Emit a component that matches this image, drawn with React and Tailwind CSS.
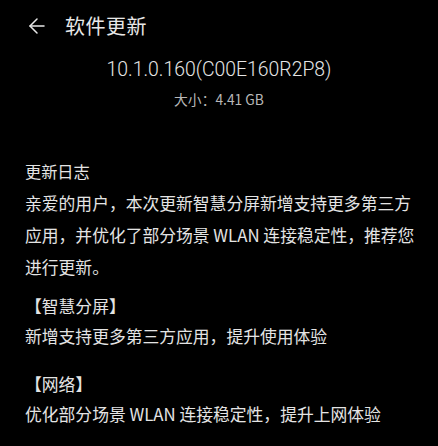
import { ArrowLeft } from 'lucide-react';

const cjk = { fontFamily: '"Noto Sans CJK SC", "Noto Sans", sans-serif' };

function Section({ title, lines, className = '' }) {
  return (
    <div className={className}>
      <div className="text-[16.8px] leading-[30px] text-[#e4e4e4] whitespace-nowrap">【{title}】</div>
      {lines.map((line, i) => (
        <div key={i} className="text-[16.8px] leading-[30px] text-[#e4e4e4] whitespace-nowrap">
          {line}
        </div>
      ))}
    </div>
  );
}

export default function App() {
  return (
    <div className="w-[438px] h-[446px] bg-black overflow-hidden" style={cjk}>
      {/* header */}
      <div className="flex items-center h-[51px] pl-[25px]">
        <ArrowLeft size={24} strokeWidth={1.5} className="text-[#e8e8e8]" />
        <span className="ml-[16px] text-[20px] tracking-[0.5px] text-[#e8e8e8]">软件更新</span>
      </div>

      {/* version */}
      <div className="flex flex-col items-center">
        <div
          className="mt-[5px] text-[19.4px] leading-[28px] font-light text-[#e6e6e6]"
          style={{ fontFamily: 'Roboto, "Liberation Sans", sans-serif' }}
        >
          10.1.0.160(C00E160R2P8)
        </div>
        <div className="mt-[5px] text-[13.8px] leading-[20px] text-[#b8b8b8]">大小：4.41 GB</div>
      </div>

      {/* changelog */}
      <div className="px-[25px] mt-[47px]">
        <div className="text-[16.2px] leading-[31px] text-[#e4e4e4]">更新日志</div>
        <div className="text-[16.8px] leading-[32px] text-[#e4e4e4] whitespace-nowrap">
          <div>亲爱的用户，本次更新智慧分屏新增支持更多第三方</div>
          <div>应用，并优化了部分场景 WLAN 连接稳定性，推荐您</div>
          <div>进行更新。</div>
        </div>
        <Section className="mt-[8px]" title="智慧分屏" lines={['新增支持更多第三方应用，提升使用体验']} />
        <Section className="mt-[18px]" title="网络" lines={['优化部分场景 WLAN 连接稳定性，提升上网体验']} />
      </div>
    </div>
  );
}
